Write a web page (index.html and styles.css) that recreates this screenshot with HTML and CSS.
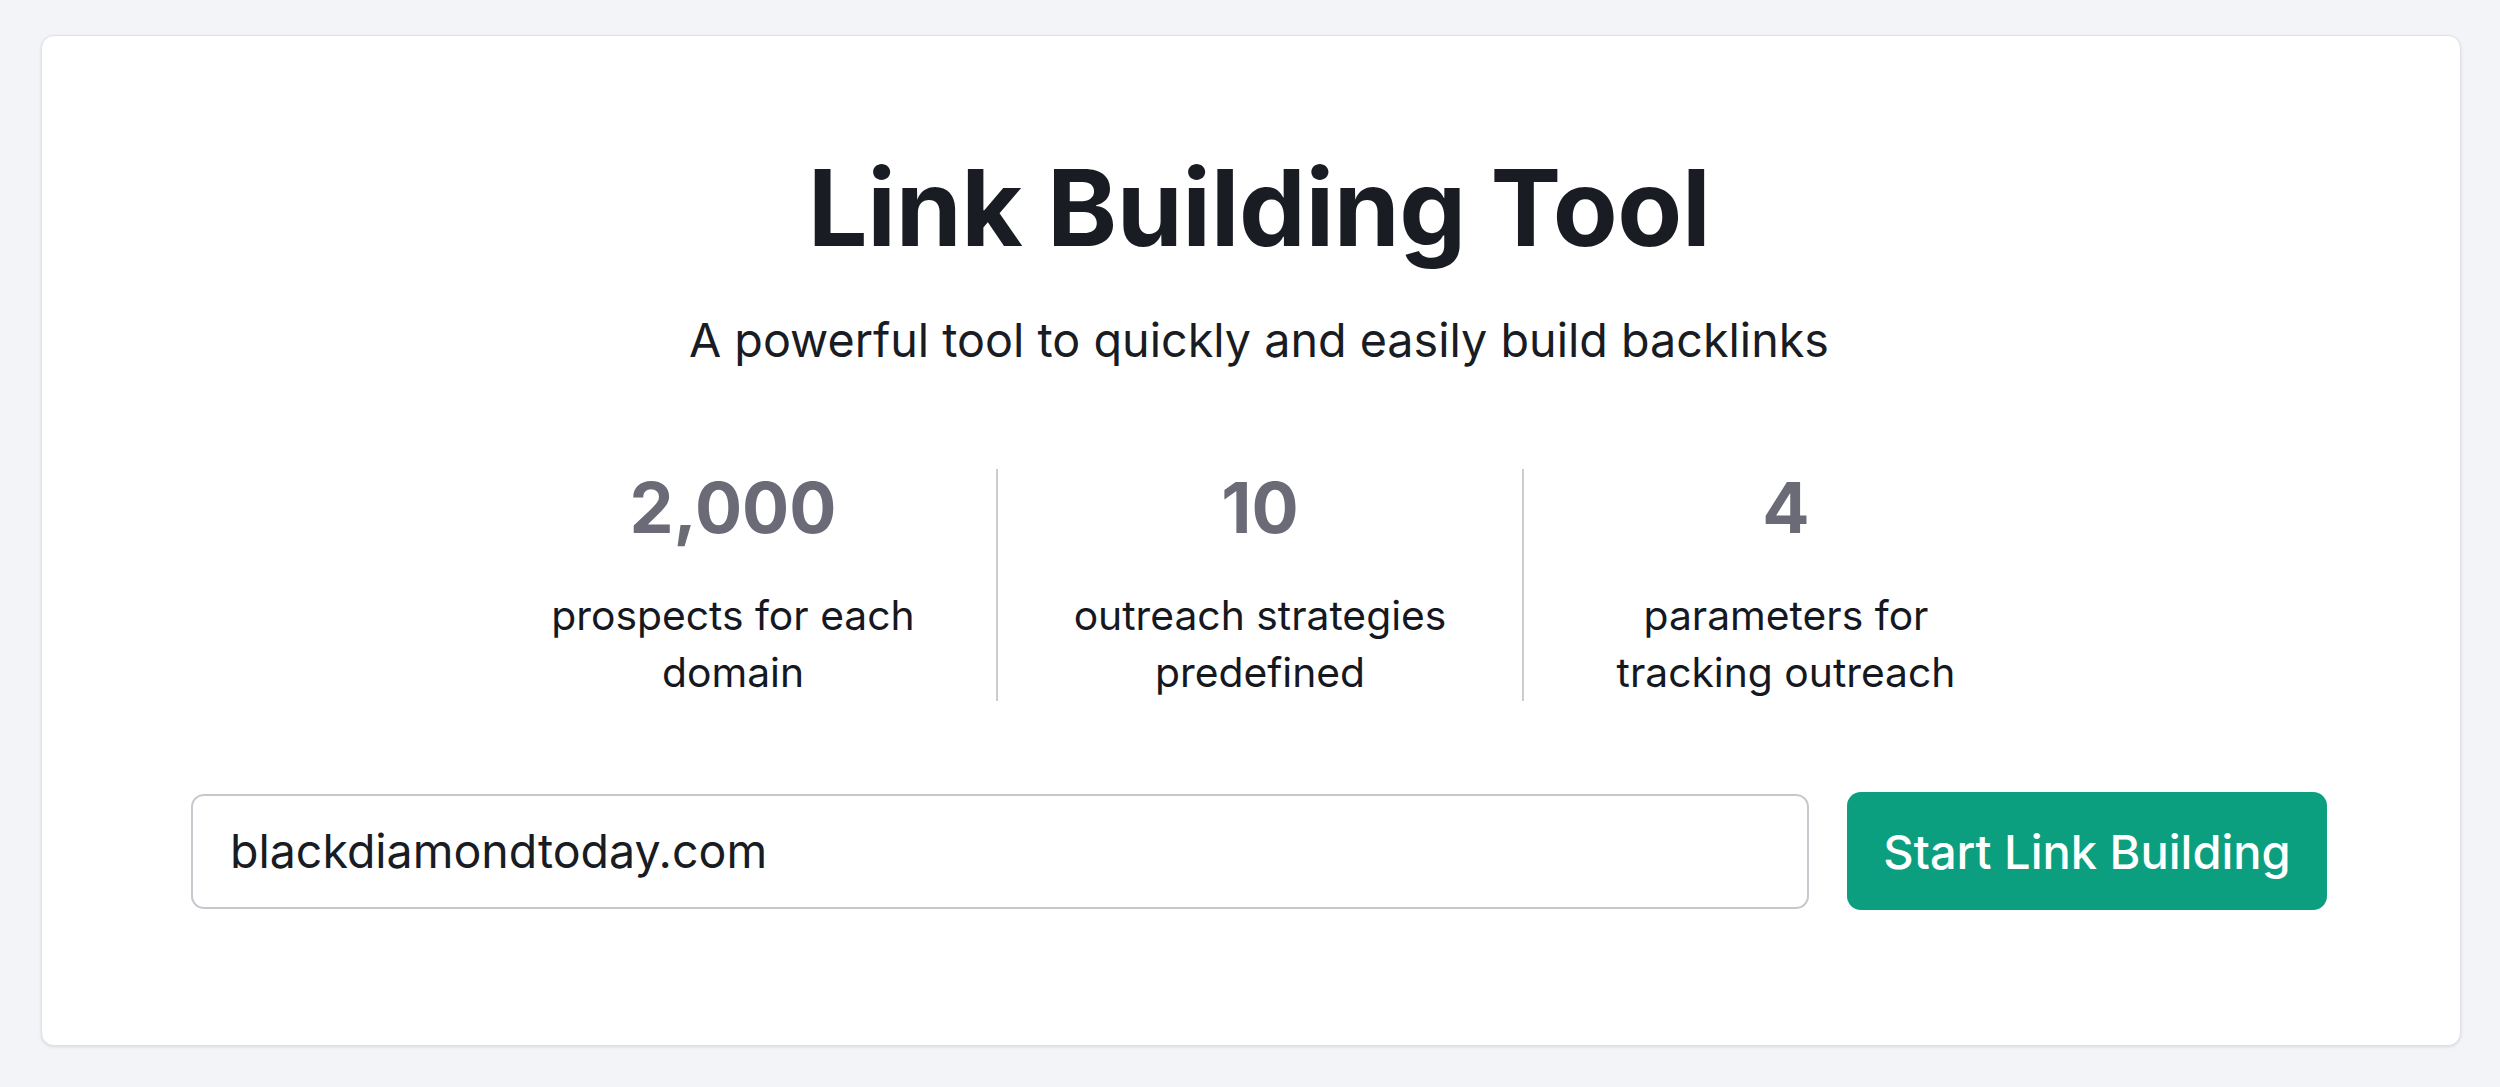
FILE: index.html
```html
<!DOCTYPE html>
<html lang="en">
<head>
<meta charset="utf-8">
<title>Link Building Tool</title>
<link rel="stylesheet" href="styles.css">
</head>
<body>
  <main class="card">
    <h1 class="title">Link Building Tool</h1>
    <p class="subtitle">A powerful tool to quickly and easily build backlinks</p>
    <div class="stats">
      <div class="stat">
        <div class="stat-num">2,000</div>
        <div class="stat-label">prospects for each domain</div>
      </div>
      <div class="stat">
        <div class="stat-num">10</div>
        <div class="stat-label">outreach strategies predefined</div>
      </div>
      <div class="stat">
        <div class="stat-num">4</div>
        <div class="stat-label">parameters for tracking outreach</div>
      </div>
    </div>
    <form class="search">
      <input class="search-input" type="text" value="blackdiamondtoday.com">
      <button class="search-btn" type="button">Start Link Building</button>
    </form>
  </main>
</body>
</html>
```
FILE: styles.css
```css
* { box-sizing: border-box; }
html, body { margin: 0; }
body {
  background: #f3f4f7;
  font-family: "Inter", "Noto Sans", sans-serif;
  color: #1a1c23;
  padding: 35px 39px 41px 41px;
}
.card {
  background: #fff;
  border: 1px solid #e1e2e6;
  border-radius: 13px;
  box-shadow: 0 1px 3px rgba(30, 32, 40, 0.12);
  padding: 108px 133px 135px 149px;
  display: flex;
  flex-direction: column;
  align-items: center;
}
.title {
  margin: 0;
  font-size: 106px;
  line-height: 128px;
  font-weight: 700;
  letter-spacing: -0.4px;
  color: #1a1c23;
}
.subtitle {
  margin: 39px 0 0;
  font-size: 46.7px;
  line-height: 58px;
  font-weight: 400;
  color: #1a1c23;
}
.stats {
  margin-top: 100px;
  display: grid;
  grid-template-columns: repeat(3, 526px);
}
.stat {
  padding: 4px 50px 0;
  text-align: center;
}
.stat + .stat { border-left: 2px solid #cbcdd2; }
.stat-num {
  font-size: 70px;
  line-height: 70px;
  font-weight: 700;
  color: #6b6b77;
}
.stat-label {
  margin: 44px auto 0;
  max-width: 410px;
  font-size: 40.8px;
  line-height: 57px;
  color: #16181f;
}
.search {
  margin: 91px 0 0;
  align-self: stretch;
  display: flex;
  align-items: center;
  gap: 38px;
}
.search-input {
  flex: 1;
  height: 115px;
  border: 2px solid #c6c8cd;
  border-radius: 13px;
  padding: 0 37px;
  font-family: "Inter", sans-serif;
  font-size: 46.5px;
  color: #1a1c23;
  background: #fff;
  outline: none;
}
.search-btn {
  width: 480px;
  height: 118px;
  border: none;
  border-radius: 14px;
  background: #0b9f80;
  color: #fff;
  font-family: "Inter", sans-serif;
  font-size: 47px;
  font-weight: 500;
  cursor: pointer;
}
```
